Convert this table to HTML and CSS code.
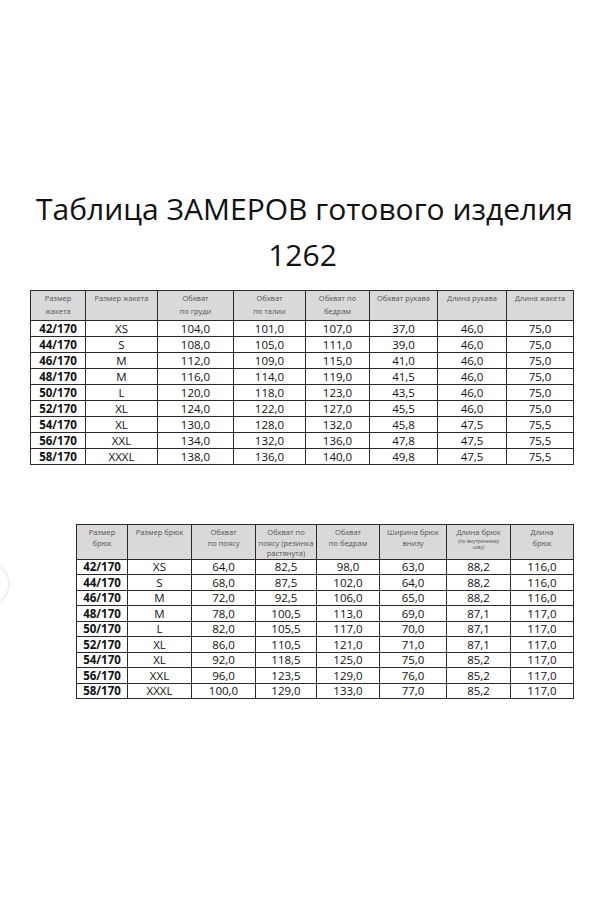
FILE: index.html
```html
<!DOCTYPE html>
<html lang="ru">
<head>
<meta charset="utf-8">
<title>Таблица ЗАМЕРОВ готового изделия 1262</title>
<link rel="stylesheet" href="styles.css">
</head>
<body>
<div class="deco-circle"></div>
<main class="page">
  <h1 class="title">
    <span class="title-line">Таблица ЗАМЕРОВ готового изделия</span>
    <span class="title-line second">1262</span>
  </h1>

  <table class="sizes jacket">
    <colgroup>
      <col class="j1"><col class="j2"><col class="j3"><col class="j4"><col class="j5"><col class="j6"><col class="j7"><col class="j8">
    </colgroup>
    <thead>
      <tr>
        <th>Размер<br>жакета</th>
        <th>Размер жакета</th>
        <th>Обхват<br>по груди</th>
        <th>Обхват<br>по талии</th>
        <th>Обхват по<br>бедрам</th>
        <th>Обхват рукава</th>
        <th>Длина рукава</th>
        <th>Длина жакета</th>
      </tr>
    </thead>
    <tbody>
      <tr><td>42/170</td><td>XS</td><td>104,0</td><td>101,0</td><td>107,0</td><td>37,0</td><td>46,0</td><td>75,0</td></tr>
      <tr><td>44/170</td><td>S</td><td>108,0</td><td>105,0</td><td>111,0</td><td>39,0</td><td>46,0</td><td>75,0</td></tr>
      <tr><td>46/170</td><td>M</td><td>112,0</td><td>109,0</td><td>115,0</td><td>41,0</td><td>46,0</td><td>75,0</td></tr>
      <tr><td>48/170</td><td>M</td><td>116,0</td><td>114,0</td><td>119,0</td><td>41,5</td><td>46,0</td><td>75,0</td></tr>
      <tr><td>50/170</td><td>L</td><td>120,0</td><td>118,0</td><td>123,0</td><td>43,5</td><td>46,0</td><td>75,0</td></tr>
      <tr><td>52/170</td><td>XL</td><td>124,0</td><td>122,0</td><td>127,0</td><td>45,5</td><td>46,0</td><td>75,0</td></tr>
      <tr><td>54/170</td><td>XL</td><td>130,0</td><td>128,0</td><td>132,0</td><td>45,8</td><td>47,5</td><td>75,5</td></tr>
      <tr><td>56/170</td><td>XXL</td><td>134,0</td><td>132,0</td><td>136,0</td><td>47,8</td><td>47,5</td><td>75,5</td></tr>
      <tr><td>58/170</td><td>XXXL</td><td>138,0</td><td>136,0</td><td>140,0</td><td>49,8</td><td>47,5</td><td>75,5</td></tr>
    </tbody>
  </table>

  <table class="sizes pants">
    <colgroup>
      <col class="p1"><col class="p2"><col class="p3"><col class="p4"><col class="p5"><col class="p6"><col class="p7"><col class="p8">
    </colgroup>
    <thead>
      <tr>
        <th>Размер<br>брюк</th>
        <th>Размер брюк</th>
        <th>Обхват<br>по поясу</th>
        <th>Обхват по<br>поясу (резинка<br>растянута)</th>
        <th>Обхват<br>по бедрам</th>
        <th>Ширина брюк<br>внизу</th>
        <th>Длина брюк<br><span class="tiny">(по внутреннему<br>шву)</span></th>
        <th>Длина<br>брюк</th>
      </tr>
    </thead>
    <tbody>
      <tr><td>42/170</td><td>XS</td><td>64,0</td><td>82,5</td><td>98,0</td><td>63,0</td><td>88,2</td><td>116,0</td></tr>
      <tr><td>44/170</td><td>S</td><td>68,0</td><td>87,5</td><td>102,0</td><td>64,0</td><td>88,2</td><td>116,0</td></tr>
      <tr><td>46/170</td><td>M</td><td>72,0</td><td>92,5</td><td>106,0</td><td>65,0</td><td>88,2</td><td>116,0</td></tr>
      <tr><td>48/170</td><td>M</td><td>78,0</td><td>100,5</td><td>113,0</td><td>69,0</td><td>87,1</td><td>117,0</td></tr>
      <tr><td>50/170</td><td>L</td><td>82,0</td><td>105,5</td><td>117,0</td><td>70,0</td><td>87,1</td><td>117,0</td></tr>
      <tr><td>52/170</td><td>XL</td><td>86,0</td><td>110,5</td><td>121,0</td><td>71,0</td><td>87,1</td><td>117,0</td></tr>
      <tr><td>54/170</td><td>XL</td><td>92,0</td><td>118,5</td><td>125,0</td><td>75,0</td><td>85,2</td><td>117,0</td></tr>
      <tr><td>56/170</td><td>XXL</td><td>96,0</td><td>123,5</td><td>129,0</td><td>76,0</td><td>85,2</td><td>117,0</td></tr>
      <tr><td>58/170</td><td>XXXL</td><td>100,0</td><td>129,0</td><td>133,0</td><td>77,0</td><td>85,2</td><td>117,0</td></tr>
    </tbody>
  </table>
</main>
</body>
</html>
```

FILE: styles.css
```css
html, body {
  margin: 0;
  padding: 0;
  background: #ffffff;
}

body {
  font-family: "Open Sans", "Noto Sans", "DejaVu Sans", sans-serif;
  color: #111111;
  width: 599px;
  height: 899px;
  overflow: hidden;
  position: relative;
}

.deco-circle {
  position: absolute;
  left: -32px;
  top: 563px;
  width: 38px;
  height: 38px;
  border: 2px solid #f0f0f0;
  border-radius: 50%;
}

.page {
  padding-top: 189px;
  display: flex;
  flex-direction: column;
}

.title {
  margin: 0;
  font-weight: 400;
  font-size: 30px;
  color: #111111;
  text-align: center;
  display: flex;
  flex-direction: column;
  align-items: center;
}

.title-line {
  display: block;
  line-height: 40px;
  padding-left: 10px;
}

.title-line.second {
  margin-top: 6px;
  padding-left: 6px;
}

.sizes {
  border-collapse: collapse;
  table-layout: fixed;
}

.sizes th,
.sizes td {
  border: 1px solid #2a2a2a;
  padding: 0;
  text-align: center;
}

.sizes th {
  background: #d9d9d9;
  color: #555555;
  font-weight: 400;
  font-size: 7.5px;
  vertical-align: top;
}

.sizes td {
  font-size: 11.5px;
  line-height: 14px;
  vertical-align: middle;
  color: #111111;
}

.sizes td:first-child {
  font-weight: 700;
}

.jacket {
  margin-top: 15px;
  margin-left: 30px;
  width: 543px;
}

.jacket th {
  height: 28px;
  line-height: 13px;
  padding-top: 1px;
}

.jacket tbody tr {
  height: 16px;
}

.j1 { width: 55px; }
.j2 { width: 72px; }
.j3 { width: 76px; }
.j4 { width: 72px; }
.j5 { width: 64px; }
.j6 { width: 68px; }
.j7 { width: 69px; }
.j8 { width: 67px; }

.pants {
  margin-top: 59px;
  margin-left: 76px;
  width: 497px;
}

.pants th {
  height: 30px;
  line-height: 10.5px;
  padding-top: 2px;
}

.pants tbody tr {
  height: 15.5px;
}

.pants td {
  line-height: 13px;
}

.p1 { width: 51px; }
.p2 { width: 64px; }
.p3 { width: 64px; }
.p4 { width: 61px; }
.p5 { width: 63px; }
.p6 { width: 67px; }
.p7 { width: 64px; }
.p8 { width: 63px; }

.tiny {
  font-size: 5px;
  line-height: 6px;
  display: inline-block;
}
```
